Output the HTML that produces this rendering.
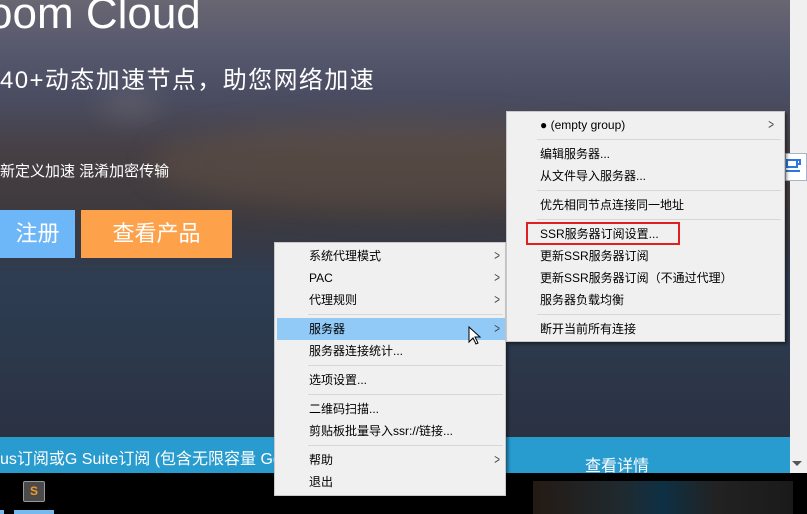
<!DOCTYPE html>
<html><head><meta charset="utf-8"><style>
*{margin:0;padding:0;box-sizing:border-box}
body{width:807px;height:514px;overflow:hidden;position:relative;background:#000;font-family:"Liberation Sans","Noto Sans CJK SC",sans-serif}
.bg{position:absolute;left:0;top:0;width:790px;height:437px;background:linear-gradient(180deg,#6a6672 0%,#585a6e 10%,#4a4d62 22%,#463f44 35%,#3f3a3e 48%,#343a48 58%,#2e3d52 64%,#2c3a4e 75%,#2b3242 100%)}
.glow{position:absolute;border-radius:50%;filter:blur(14px)}
.sb{position:absolute;left:790px;top:0;width:17px;height:473px;background:#f0f0f0}
.t{position:absolute;color:#fff;white-space:nowrap}
.btn{position:absolute;top:210px;height:48px;color:#fff;font-size:22px;line-height:48px;text-align:center}
.bar{position:absolute;left:0;top:437px;width:790px;height:36px;background:#289bcf}
.menu{position:absolute;background:#f0f0f0;border:1px solid #c8c8c8;box-shadow:2px 2px 3px rgba(0,0,0,.45);font-size:12px;color:#000}
.it{position:absolute;left:0;right:0;height:22px;line-height:22px;white-space:nowrap}
.sep{position:absolute;height:1px;background:#d7d7d7}
.ar{position:absolute;font-size:14px;color:#444;transform:scaleX(.7)}
</style></head><body>
<div class="bg"></div>
<div class="glow" style="left:150px;top:120px;width:500px;height:90px;background:rgba(140,110,70,.22)"></div>
<div class="glow" style="left:100px;top:95px;width:60px;height:20px;background:rgba(255,240,200,.15)"></div>
<div class="t" style="left:-12px;top:-11px;font-size:44px;font-weight:300">oom Cloud</div>
<div class="t" style="left:0;top:60px;font-size:24px;letter-spacing:1.4px">40+动态加速节点，助您网络加速</div>
<div class="t" style="left:0;top:160px;font-size:15px">新定义加速 混淆加密传输</div>
<div class="btn" style="left:0;width:75px;background:#6db6f8">注册</div>
<div class="btn" style="left:81px;width:151px;background:#fda24a">查看产品</div>
<div class="bar"></div>
<div class="t" style="left:0;top:445px;font-size:16px">us订阅或G Suite订阅 (包含无限容量 Go</div>
<div class="t" style="left:585px;top:452px;font-size:16px">查看详情</div>
<div class="sb"></div>
<div style="position:absolute;left:792px;top:461px;width:0;height:0;border-left:5px solid transparent;border-right:5px solid transparent;border-top:5px solid #555"></div>
<div style="position:absolute;left:785px;top:153px;width:22px;height:28px;background:#fff;border:1px solid #aab4c8"></div>
<svg style="position:absolute;left:786px;top:158px" width="21" height="18"><path d="M1 2h10v7H1zM11 2h3v4h-3" stroke="#2a78e0" stroke-width="2" fill="none"/><path d="M0 13h14" stroke="#2a78e0" stroke-width="2"/></svg>
<div style="position:absolute;left:533px;top:481px;width:260px;height:33px;background:linear-gradient(90deg,#241a14,#1f2a30 35%,#0e3044 50%,#222 70%,#1a1a1a)"></div>
<div style="position:absolute;left:23px;top:481px;width:22px;height:21px;background:#4a4a4a;border:1px solid #999;border-radius:2px;color:#f29a2a;font-size:12px;text-align:center;line-height:19px;font-weight:bold">S</div>
<div style="position:absolute;left:14px;top:510px;width:40px;height:4px;background:#76b9ed"></div>
<div style="position:absolute;left:0;top:510px;width:4px;height:4px;background:#76b9ed"></div>

<div class="menu" style="left:274px;top:242px;width:232px;height:254px">
<div class="it" style="top:2px;padding-left:34px">系统代理模式</div><div class="ar" style="left:218px;top:4px">&gt;</div>
<div class="it" style="top:24px;padding-left:34px">PAC</div><div class="ar" style="left:218px;top:26px">&gt;</div>
<div class="it" style="top:46px;padding-left:34px">代理规则</div><div class="ar" style="left:218px;top:48px">&gt;</div>
<div class="sep" style="left:33px;right:2px;top:71px"></div>
<div class="it" style="top:75px;left:2px;background:#91c9f7;padding-left:32px">服务器</div><div class="ar" style="left:218px;top:77px">&gt;</div>
<div class="it" style="top:97px;padding-left:34px">服务器连接统计...</div>
<div class="sep" style="left:33px;right:2px;top:122px"></div>
<div class="it" style="top:126px;padding-left:34px">选项设置...</div>
<div class="sep" style="left:33px;right:2px;top:151px"></div>
<div class="it" style="top:155px;padding-left:34px">二维码扫描...</div>
<div class="it" style="top:177px;padding-left:34px">剪贴板批量导入ssr://链接...</div>
<div class="sep" style="left:33px;right:2px;top:202px"></div>
<div class="it" style="top:206px;padding-left:34px">帮助</div><div class="ar" style="left:218px;top:208px">&gt;</div>
<div class="it" style="top:228px;padding-left:34px">退出</div>
</div>
<svg style="position:absolute;left:468px;top:326px" width="14" height="20"><path d="M1 1v15l4-4 3 6 2-1-3-6h5z" fill="#fff" stroke="#000" stroke-width="1"/></svg>

<div class="menu" style="left:506px;top:111px;width:279px;height:231px">
<div class="it" style="top:2px;padding-left:33px">● (empty group)</div><div class="ar" style="left:260px;top:4px">&gt;</div>
<div class="sep" style="left:30px;right:3px;top:27px"></div>
<div class="it" style="top:31px;padding-left:33px">编辑服务器...</div>
<div class="it" style="top:53px;padding-left:33px">从文件导入服务器...</div>
<div class="sep" style="left:30px;right:3px;top:78px"></div>
<div class="it" style="top:82px;padding-left:33px">优先相同节点连接同一地址</div>
<div class="sep" style="left:30px;right:3px;top:107px"></div>
<div class="it" style="top:111px;padding-left:33px">SSR服务器订阅设置...</div>
<div style="position:absolute;left:19px;top:110px;width:154px;height:23px;border:2px solid #e02020"></div>
<div class="it" style="top:133px;padding-left:33px">更新SSR服务器订阅</div>
<div class="it" style="top:155px;padding-left:33px">更新SSR服务器订阅（不通过代理）</div>
<div class="it" style="top:177px;padding-left:33px">服务器负载均衡</div>
<div class="sep" style="left:30px;right:3px;top:202px"></div>
<div class="it" style="top:206px;padding-left:33px">断开当前所有连接</div>
</div>
</body></html>
